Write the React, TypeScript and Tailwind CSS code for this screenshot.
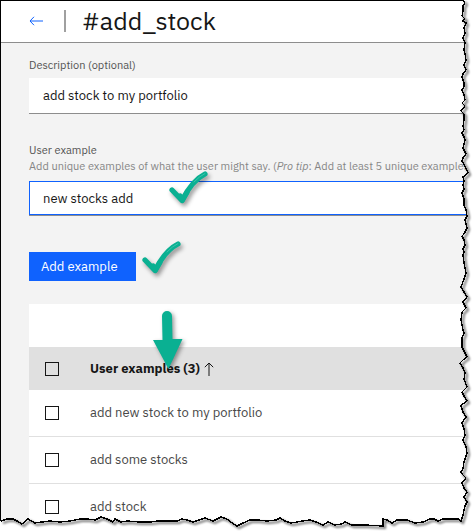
import { useState } from "react";

const examples = ["add new stock to my portfolio", "add some stocks", "add stock"];

const tornEdge =
  "463,0 465,3 463,6 463,11 462,16 465,19 463,21 466,23 464,28 465,33 463,38 465,43 464,50 465,54 466,60 464,65 466,70 463,74 462,77 464,83 464,87 462,90 464,95 465,100 462,103 465,106 461,111 464,114 464,120 463,126 464,130 462,133 464,137 465,140 463,148 466,154 463,158 462,161 465,166 468,173 463,177 464,181 463,185 464,189 462,193 464,199 464,205 466,210 467,216 465,220 467,228 464,234 462,236 464,240 465,245 463,249 464,252 463,255 464,263 466,273 464,279 461,287 464,292 467,297 463,302 466,308 462,312 461,320 463,330 464,333 462,338 462,347 465,353 467,357 463,360 460,363 463,368 465,373 464,379 467,387 462,392 464,396 467,401 463,404 461,406 463,412 466,417 462,423 464,429 465,435 463,440 466,447 467,453 464,462 463,469 461,472 463,475 466,478 462,483 464,488 467,492 464,497 467,502 465,506 464,510 463,515 461,521 458,519 443,519 438,521 434,519 430,519 423,522 415,523 407,520 397,520 392,523 387,520 383,519 383,526 365,525 352,525 345,522 342,524 335,525 328,522 323,525 316,522 310,520 302,521 297,522 291,523 285,521 280,518 276,520 267,521 258,520 250,520 243,523 237,526 232,523 227,519 221,517 213,521 205,518 199,520 193,522 187,520 182,519 177,521 167,521 158,521 150,522 139,522 128,521 121,522 115,519 113,522 107,519 101,517 95,520 88,519 80,519 70,521 60,522 50,521 42,522 35,523 28,519 22,524 17,521 13,519 7,519 1,521";

function TornFrame() {
  return (
    <svg
      className="pointer-events-none absolute inset-0 size-full"
      viewBox="0 0 473 531"
      preserveAspectRatio="none"
      aria-hidden="true"
    >
      <defs>
        <filter id="edge-shadow" x="-5%" y="-5%" width="110%" height="110%">
          <feGaussianBlur stdDeviation="1" />
        </filter>
      </defs>
      <polygon points={`473,0 ${tornEdge} 0,521 0,531 473,531`} fill="#fff" />
      <polyline points={tornEdge} fill="none" stroke="#000" strokeOpacity=".55" strokeWidth="2" transform="translate(2 2)" filter="url(#edge-shadow)" />
      <polyline points={tornEdge} fill="none" stroke="#000" strokeWidth="1.4" shapeRendering="crispEdges" />
      <path d="M0 .5H463M.5 0V521" stroke="#000" shapeRendering="crispEdges" />
    </svg>
  );
}

function CheckMark({ className }: { className: string }) {
  return (
    <svg className={`pointer-events-none absolute h-12 w-12 drop-shadow-[2px_3px_2px_rgba(0,0,0,0.4)] ${className}`} viewBox="0 0 48 48" fill="none" strokeLinecap="round" strokeLinejoin="round" aria-hidden="true">
      <path d="M7 21L17 31.500Q27 11.500 40 5" stroke="#0ab092" strokeWidth="5.2" />
      <path d="M15 27L17.500 31L22 23.500" stroke="#0ab092" strokeWidth="5.2" />
      <path d="M29 13Q34 7.500 40 4.500" stroke="#3cc4ab" strokeWidth="1" />
    </svg>
  );
}

function DownArrow() {
  return (
    <svg className="pointer-events-none absolute -right-5 bottom-2 h-15 w-9 drop-shadow-[2px_2px_2px_rgba(0,0,0,0.4)]" viewBox="0 0 36 60" aria-hidden="true">
      <path d="M12 6a5 5 0 0 1 10 0L22.500 29H32.500L18.500 59L3 30H12.500Z" fill="#0ab092" />
    </svg>
  );
}

function Tick({ label, checked, onChange }: { label: string; checked: boolean; onChange: () => void }) {
  return (
    <input
      type="checkbox"
      aria-label={label}
      checked={checked}
      onChange={onChange}
      className="block size-3.5 appearance-none border border-[#161616] checked:bg-[#161616]"
    />
  );
}

export default function App() {
  const [description, setDescription] = useState("add stock to my portfolio");
  const [example, setExample] = useState("new stocks add");
  const [picked, setPicked] = useState<string[]>([]);
  const toggle = (name: string) =>
    setPicked((now) => (now.includes(name) ? now.filter((n) => n !== name) : [...now, name]));

  return (
    <div className="relative min-h-screen overflow-hidden bg-[#f3f3f3] font-['IBM_Plex_Sans',Roboto,sans-serif] text-[#161616]">
      <header className="flex h-[43px] items-center border-b border-[#8d8d8d] bg-white pl-[29px]">
        <button type="button" aria-label="Back" className="text-[#0f62fe]">
          <svg width="14" height="10" viewBox="0 0 14 10" fill="none" stroke="currentColor" aria-hidden="true">
            <path d="M5 .8L1 5l4 4.200M1 5h13" />
          </svg>
        </button>
        <span className="ml-[21px] h-[22px] w-0.5 bg-[#a0a0a0]" />
        <h1 className="ml-4 text-[25px] leading-8">#add_stock</h1>
      </header>

      <main className="pl-[29px] pt-3.5">
        <label htmlFor="description" className="block text-[11px] leading-4 text-[#525252]">Description (optional)</label>
        <input
          id="description"
          value={description}
          onChange={(e) => setDescription(e.target.value)}
          className="mt-[5px] block h-9 w-full border-b border-[#8d8d8d] bg-white px-3.5 text-[13px] outline-none"
        />

        <label htmlFor="example" className="mt-7 block text-[11px] leading-4 text-[#525252]">User example</label>
        <p id="example-help" className="whitespace-nowrap text-[11px] leading-4 text-[#868686]">
          Add unique examples of what the user might say. (<em>Pro tip</em>: Add at least 5 unique examples)
        </p>
        <div className="relative mt-[7px] border-b border-[#8d8d8d]">
          <input
            id="example"
            aria-describedby="example-help"
            value={example}
            onChange={(e) => setExample(e.target.value)}
            className="block h-[34px] w-full border border-[#0f62fe] bg-white px-[13px] text-[13px] outline-none"
          />
          <CheckMark className="-top-3 left-[136px]" />
        </div>

        <div className="relative mt-9 w-fit">
          <button type="button" className="block h-[29px] w-[107px] bg-[#0f62fe] pl-3 text-left text-[13px] text-white">Add example</button>
          <CheckMark className="-right-[50px] -top-[13px]" />
        </div>

        <table className="mt-[23px] w-full border-separate border-spacing-0 bg-white text-left text-[13px]">
          <caption className="h-[43px] bg-white" aria-label="User examples" />
          <thead>
            <tr className="h-[43px] bg-[#e0e0e0]">
              <th className="w-[61px] pl-4">
                <Tick
                  label="Select all examples"
                  checked={picked.length === examples.length}
                  onChange={() => setPicked(picked.length === examples.length ? [] : examples)}
                />
              </th>
              <th className="font-bold">
                <div className="flex items-center gap-1">
                  <span className="relative">
                    User examples (3)
                    <span className="absolute bottom-0 right-[34px]"><DownArrow /></span>
                  </span>
                  <svg width="10" height="14" viewBox="0 0 10 14" fill="none" stroke="#161616" aria-hidden="true">
                    <path d="M5 14V1M.8 5.200L5 1l4.200 4.200" />
                  </svg>
                </div>
              </th>
            </tr>
          </thead>
          <tbody className="text-[#484848]">
            {examples.map((name) => (
              <tr key={name} className="h-[47px]">
                <td className="border-b border-[#e0e0e0] pl-4">
                  <Tick label={`Select ${name}`} checked={picked.includes(name)} onChange={() => toggle(name)} />
                </td>
                <td className="border-b border-[#e0e0e0]">{name}</td>
              </tr>
            ))}
          </tbody>
        </table>
      </main>
      <TornFrame />
    </div>
  );
}
